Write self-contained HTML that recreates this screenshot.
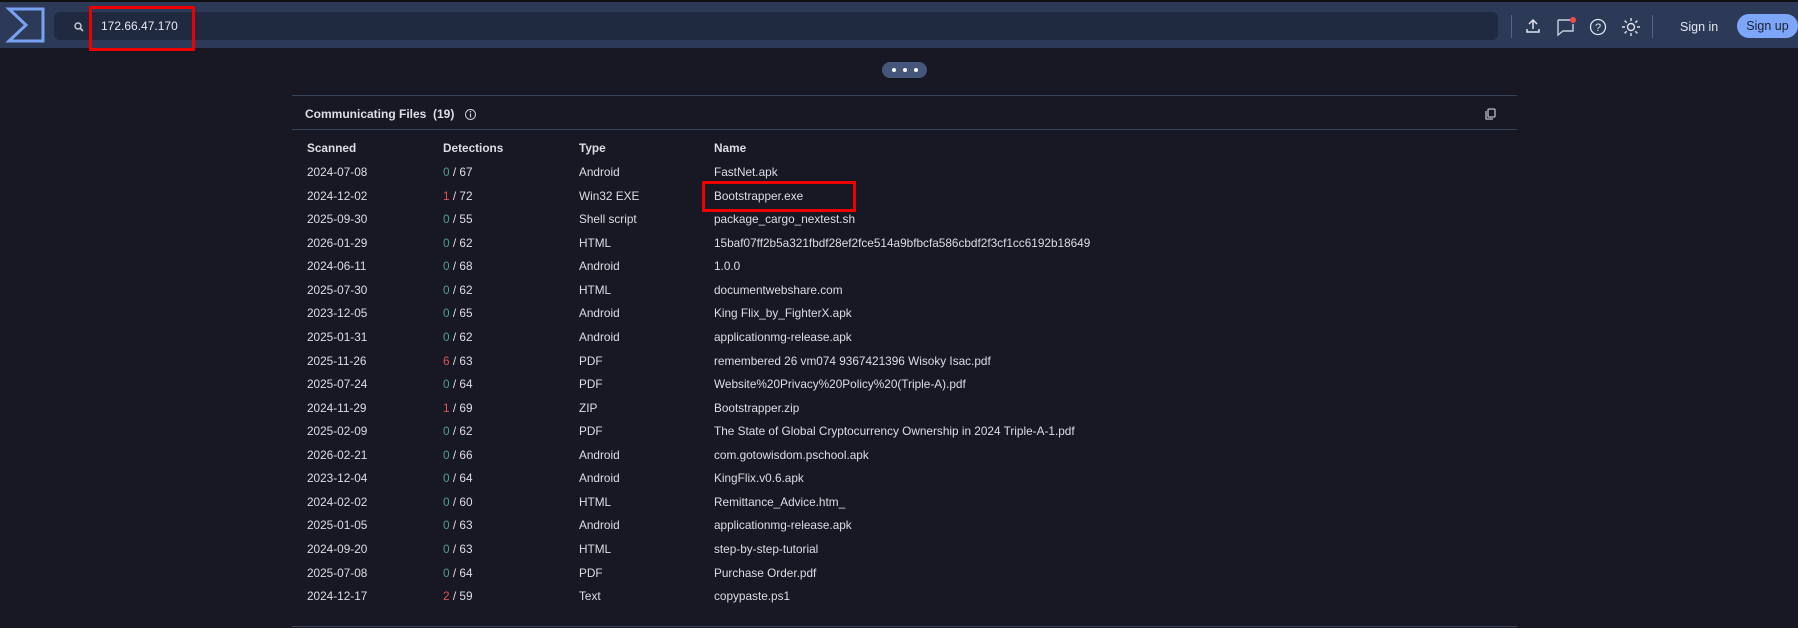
<!DOCTYPE html>
<html><head><meta charset="utf-8"><style>
*{margin:0;padding:0;box-sizing:border-box}
html,body{width:1798px;height:628px;overflow:hidden;background:#181824;font-family:"Liberation Sans",sans-serif;color:#dcdde6}
.hdr{position:absolute;left:0;top:0;width:1798px;height:48px;background:#2c3a57;border-top:2px solid #111}
.search{position:absolute;left:54px;top:10px;width:1444px;height:28px;background:#1f2940;border-radius:6px}
.abs{position:absolute}
.sep{position:absolute;top:13px;width:1px;height:23px;background:#55647f}
.t{position:absolute;font-size:11.8px;white-space:nowrap;line-height:14px}
.g{color:#4f9e8a}.r{color:#e0524f}
.b{font-weight:bold}
</style></head><body>
<div class="hdr">
<svg class="abs" style="left:0;top:0" width="50" height="46"><path d="M9 7 H43 V39 H9 L26 23 Z" fill="none" stroke="#7aa2f2" stroke-width="3" stroke-linejoin="miter"/></svg>
<div class="search"></div>
<svg class="abs" style="left:73px;top:19px" width="12" height="12"><circle cx="5" cy="5" r="3" fill="none" stroke="#c8ccd8" stroke-width="1.4"/><path d="M7 7 L10 10" stroke="#c8ccd8" stroke-width="1.6"/></svg>
<div class="t" style="left:101px;top:17px;font-size:12px;color:#e8e8ef">172.66.47.170</div>
<div class="abs" style="left:89px;top:4px;width:106px;height:45px;border:3px solid #e00"></div>
<div class="sep" style="left:1511px"></div>
<svg class="abs" style="left:1524px;top:15px" width="18" height="18"><path d="M9 12 V3 M5 7 L9 3 L13 7 M3 12 V15 H15 V12" fill="none" stroke="#dfe3ee" stroke-width="1.5"/></svg>
<svg class="abs" style="left:1555px;top:13px" width="22" height="22"><path d="M3 5 H15 M18 9 V16 H8 L3 20 V5" fill="none" stroke="#c9cfde" stroke-width="1.4"/><circle cx="18" cy="5" r="3" fill="#f04a4a"/></svg>
<svg class="abs" style="left:1589px;top:16px" width="18" height="18"><circle cx="9" cy="9" r="7.5" fill="none" stroke="#dfe3ee" stroke-width="1.3"/><text x="9" y="13" font-size="11" text-anchor="middle" fill="#dfe3ee" font-family="Liberation Sans">?</text></svg>
<svg class="abs" style="left:1622px;top:16px" width="18" height="18"><circle cx="9" cy="9" r="3.5" fill="none" stroke="#dfe3ee" stroke-width="1.4"/><path d="M9 0V3M9 15V18M0 9H3M15 9H18M2.6 2.6L4.7 4.7M13.3 13.3L15.4 15.4M2.6 15.4L4.7 13.3M13.3 4.7L15.4 2.6" stroke="#dfe3ee" stroke-width="1.4"/></svg>
<div class="sep" style="left:1652px"></div>
<div class="t" style="left:1680px;top:18px;color:#e4e6ee;font-size:12.5px">Sign in</div>
<div class="abs" style="left:1737px;top:12px;width:61px;height:24px;background:#7ea6f8;border-radius:12px;color:#1b2233;font-size:12.5px;line-height:24px;text-align:center">Sign up</div>
</div>
<div class="abs" style="left:882px;top:62px;width:45px;height:16px;background:#45567a;border-radius:8px"></div>
<div class="abs" style="left:892px;top:68px;width:4px;height:4px;background:#fff;border-radius:2px"></div>
<div class="abs" style="left:903px;top:68px;width:4px;height:4px;background:#fff;border-radius:2px"></div>
<div class="abs" style="left:914px;top:68px;width:4px;height:4px;background:#fff;border-radius:2px"></div>
<div class="abs" style="left:292px;top:95px;width:1225px;height:1px;background:#38435c"></div>
<div class="abs" style="left:292px;top:129px;width:1225px;height:1px;background:#38435c"></div>
<div class="abs" style="left:292px;top:626px;width:1225px;height:1px;background:#38435c"></div>
<div class="t b" style="left:305px;top:107px;font-size:12px">Communicating Files&nbsp; (19)</div>
<svg class="abs" style="left:464px;top:108px" width="13" height="13"><circle cx="6.5" cy="6.5" r="5" fill="none" stroke="#c8ccd8" stroke-width="1"/><path d="M6.5 5.5V9.5" stroke="#c8ccd8" stroke-width="1.2"/><circle cx="6.5" cy="3.8" r=".8" fill="#c8ccd8"/></svg>
<svg class="abs" style="left:1484px;top:107px" width="14" height="14"><rect x="4" y="2" width="7" height="8" rx="1" fill="none" stroke="#b8bcc8" stroke-width="1.3"/><path d="M2 4V12H9" fill="none" stroke="#b8bcc8" stroke-width="1.3"/></svg>
<div class="t b" style="left:307px;top:141px">Scanned</div>
<div class="t b" style="left:443px;top:141px">Detections</div>
<div class="t b" style="left:579px;top:141px">Type</div>
<div class="t b" style="left:714px;top:141px">Name</div>
<div id="rows"></div>
<div class="abs" style="left:702px;top:181px;width:154px;height:31px;border:3px solid #e00"></div>
<script>
var d=[["2024-07-08",0,67,"Android","FastNet.apk"],["2024-12-02",1,72,"Win32 EXE","Bootstrapper.exe"],["2025-09-30",0,55,"Shell script","package_cargo_nextest.sh"],["2026-01-29",0,62,"HTML","15baf07ff2b5a321fbdf28ef2fce514a9bfbcfa586cbdf2f3cf1cc6192b18649"],["2024-06-11",0,68,"Android","1.0.0"],["2025-07-30",0,62,"HTML","documentwebshare.com"],["2023-12-05",0,65,"Android","King Flix_by_FighterX.apk"],["2025-01-31",0,62,"Android","applicationmg-release.apk"],["2025-11-26",6,63,"PDF","remembered 26 vm074 9367421396 Wisoky Isac.pdf"],["2025-07-24",0,64,"PDF","Website%20Privacy%20Policy%20(Triple-A).pdf"],["2024-11-29",1,69,"ZIP","Bootstrapper.zip"],["2025-02-09",0,62,"PDF","The State of Global Cryptocurrency Ownership in 2024 Triple-A-1.pdf"],["2026-02-21",0,66,"Android","com.gotowisdom.pschool.apk"],["2023-12-04",0,64,"Android","KingFlix.v0.6.apk"],["2024-02-02",0,60,"HTML","Remittance_Advice.htm_"],["2025-01-05",0,63,"Android","applicationmg-release.apk"],["2024-09-20",0,63,"HTML","step-by-step-tutorial"],["2025-07-08",0,64,"PDF","Purchase Order.pdf"],["2024-12-17",2,59,"Text","copypaste.ps1"]];
var h="";d.forEach(function(r,i){var y=(165+i*23.56).toFixed(1);
h+='<div class="t" style="left:307px;top:'+y+'px">'+r[0]+'</div>';
h+='<div class="t" style="left:443px;top:'+y+'px"><span class="'+(r[1]?'r':'g')+'">'+r[1]+'</span> / '+r[2]+'</div>';
h+='<div class="t" style="left:579px;top:'+y+'px">'+r[3]+'</div>';
h+='<div class="t" style="left:714px;top:'+y+'px">'+r[4]+'</div>';});
document.getElementById("rows").innerHTML=h;
</script>
</body></html>
